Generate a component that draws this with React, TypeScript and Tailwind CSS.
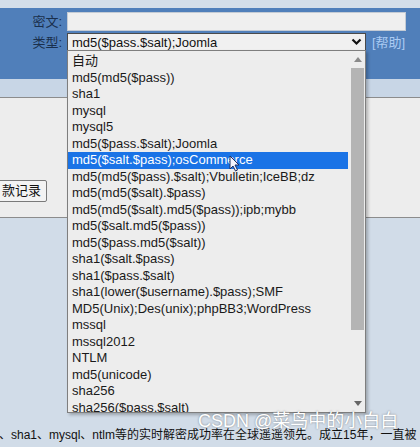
import React from "react";

const items = [
  "自动",
  "md5(md5($pass))",
  "sha1",
  "mysql",
  "mysql5",
  "md5($pass.$salt);Joomla",
  "md5($salt.$pass);osCommerce",
  "md5(md5($pass).$salt);Vbulletin;IceBB;dz",
  "md5(md5($salt).$pass)",
  "md5(md5($salt).md5($pass));ipb;mybb",
  "md5($salt.md5($pass))",
  "md5($pass.md5($salt))",
  "sha1($salt.$pass)",
  "sha1($pass.$salt)",
  "sha1(lower($username).$pass);SMF",
  "MD5(Unix);Des(unix);phpBB3;WordPress",
  "mssql",
  "mssql2012",
  "NTLM",
  "md5(unicode)",
  "sha256",
  "sha256($pass.$salt)",
];

const font = "font-['Liberation_Sans','Noto_Sans_CJK_SC',sans-serif]";

export default function App() {
  return (
    <div className={`relative w-[420px] h-[447px] overflow-hidden bg-[#d1dce8] flex flex-col ${font}`}>
      <div className="h-[8px] bg-[#d4dee9]" />
      <div className="h-[71px] bg-[#507fba] pt-[4px] flex flex-col gap-[2px]">
        <div className="flex items-center h-[19px]">
          <div className="w-[62px] text-right text-[13px] text-[#1a2f4c] leading-none">密文:</div>
          <div className="ml-[5px] w-[339px] h-[19px] bg-[#efefef] border border-[#c4cbd4]" />
        </div>
        <div className="flex items-center h-[18px]">
          <div className="w-[62px] text-right text-[13px] text-[#1a2f4c] leading-none">类型:</div>
          <div className="ml-[5px] w-[299px] h-[18px] bg-[#f0f0f0] border border-[#4a4a4a] flex items-center pl-[4px] pr-[3px]">
            <span className="flex-1 text-[13px] text-[#111] leading-none">md5($pass.$salt);Joomla</span>
            <svg width="11" height="8" viewBox="0 0 11 8">
              <polyline points="1.5,1.5 5.5,5.5 9.5,1.5" fill="none" stroke="#111" strokeWidth="2.2" />
            </svg>
          </div>
          <span className="ml-[6px] text-[13px] text-[#abcbf3] leading-none">[帮助]</span>
        </div>
      </div>
      <div className="h-[18px] bg-[#c8d6e6]" />
      <div className="h-[121px] bg-[#ededed] border-y border-[#8c8c8c] flex flex-col">
        <div className="mt-[82px] ml-[-6px] w-[53px] h-[22px] border border-[#7a7a7a] rounded-[2px] bg-[#f3f3f3] flex items-center pl-[7px] text-[13px] text-[#111]">
          款记录
        </div>
      </div>
      <div className="flex-1 flex flex-col justify-end pb-[5px]">
        <div className="whitespace-nowrap text-[12px] text-[#111] leading-[14px] ml-[-1px]">
          、sha1、mysql、ntlm等的实时解密成功率在全球遥遥领先。成立15年，一直被
        </div>
      </div>

      {/* dropdown */}
      <div className="absolute left-[67px] top-[50px] w-[299px] h-[363px] border border-[#7e7e7e] bg-[#ededed] shadow-[2px_2px_3px_rgba(0,0,0,0.25)] flex">
        <div className="flex-1 pt-[2px] pr-[2px] overflow-hidden">
          {items.map((it, i) => (
            <div
              key={i}
              className={
                i === 6
                  ? "h-[16.5px] leading-[16.5px] pl-[4px] text-[13px] whitespace-nowrap bg-[#1a73e6] text-white"
                  : "h-[16.5px] leading-[16.5px] pl-[4px] text-[13px] whitespace-nowrap text-[#1a1a1a]"
              }
            >
              {it}
            </div>
          ))}
        </div>
        <div className="w-[15px] flex flex-col items-center">
          <div className="h-[17px] flex items-center justify-center">
            <svg width="8" height="5" viewBox="0 0 8 5"><polygon points="0,5 8,5 4,0" fill="#8a8a8a" /></svg>
          </div>
          <div className="w-[13px] h-[262px] bg-[#b4b4b4]" />
          <div className="flex-1" />
          <div className="h-[17px] flex items-center justify-center">
            <svg width="8" height="5" viewBox="0 0 8 5"><polygon points="0,0 8,0 4,5" fill="#666" /></svg>
          </div>
        </div>
      </div>

      {/* mouse cursor */}
      <svg className="absolute left-[229px] top-[155px]" width="11" height="17" viewBox="0 0 11 17">
        <path d="M1 1 L1 14 L4 11 L6.5 16 L8.5 15 L6 10 L10 10 Z" fill="#f4f4ff" stroke="#203060" strokeWidth="1" />
      </svg>

      {/* watermark */}
      <div className="absolute left-[198px] top-[409px] text-[18px] leading-[24px] text-white whitespace-nowrap font-['Liberation_Sans','Noto_Sans_CJK_SC',sans-serif] font-normal [text-shadow:0_0_2px_rgba(40,40,40,0.55)]">
        CSDN @菜鸟中的小白白
      </div>
    </div>
  );
}
